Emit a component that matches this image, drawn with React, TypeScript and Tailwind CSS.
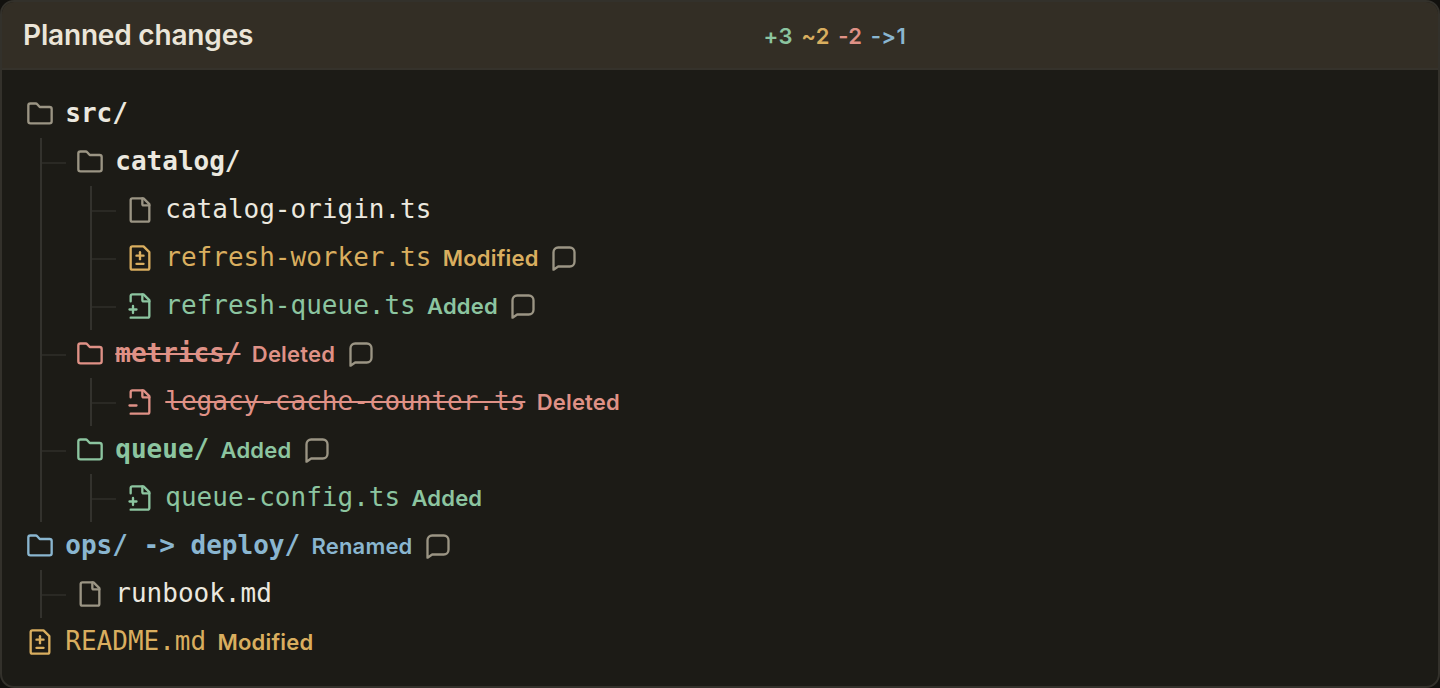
import React from 'react';

type Status = 'added' | 'modified' | 'deleted' | 'renamed';

interface TreeNode {
  name: string;
  kind: 'folder' | 'file';
  status?: Status;
  comment?: boolean;
  children?: TreeNode[];
}

const tree: TreeNode[] = [
  {
    name: 'src/',
    kind: 'folder',
    children: [
      {
        name: 'catalog/',
        kind: 'folder',
        children: [
          { name: 'catalog-origin.ts', kind: 'file' },
          { name: 'refresh-worker.ts', kind: 'file', status: 'modified', comment: true },
          { name: 'refresh-queue.ts', kind: 'file', status: 'added', comment: true },
        ],
      },
      {
        name: 'metrics/',
        kind: 'folder',
        status: 'deleted',
        comment: true,
        children: [{ name: 'legacy-cache-counter.ts', kind: 'file', status: 'deleted' }],
      },
      {
        name: 'queue/',
        kind: 'folder',
        status: 'added',
        comment: true,
        children: [{ name: 'queue-config.ts', kind: 'file', status: 'added' }],
      },
    ],
  },
  {
    name: 'ops/ -> deploy/',
    kind: 'folder',
    status: 'renamed',
    comment: true,
    children: [{ name: 'runbook.md', kind: 'file' }],
  },
  { name: 'README.md', kind: 'file', status: 'modified' },
];

const statusLabel: Record<Status, string> = {
  added: 'Added',
  modified: 'Modified',
  deleted: 'Deleted',
  renamed: 'Renamed',
};

const statusColor: Record<Status, string> = {
  added: 'text-[#8cc5a0]',
  modified: 'text-[#d9ae5f]',
  deleted: 'text-[#df9186]',
  renamed: 'text-[#8ab6d0]',
};

const iconPaths = {
  folder: ['M3.8 20h16.4a1.8 1.8 0 0 0 1.8-1.8V7.8A1.8 1.8 0 0 0 20.2 6H11.8L9.6 3.6A1.8 1.8 0 0 0 8.3 3H3.8A1.8 1.8 0 0 0 2 4.8v13.4A1.8 1.8 0 0 0 3.8 20Z'],
  file: ['M15 2H5.5A1.5 1.5 0 0 0 4 3.5v17A1.5 1.5 0 0 0 5.5 22h13a1.5 1.5 0 0 0 1.5-1.5V7Z', 'M14 2v4.8a1.2 1.2 0 0 0 1.200 1.200H20'],
  modified: ['M15 2H5.5A1.5 1.5 0 0 0 4 3.5v17A1.5 1.5 0 0 0 5.5 22h13a1.5 1.5 0 0 0 1.5-1.5V7Z', 'M9 10h6', 'M12 7v6', 'M9 17h6'],
  added: ['M4 22h14.5a1.5 1.5 0 0 0 1.5-1.5V7L15 2H5.5A1.5 1.5 0 0 0 4 3.5V8', 'M14 2v4.8a1.2 1.2 0 0 0 1.200 1.200H20', 'M3 15h6', 'M6 12v6'],
  deleted: ['M4 22h14.5a1.5 1.5 0 0 0 1.5-1.5V7L15 2H5.5A1.5 1.5 0 0 0 4 3.5V8', 'M14 2v4.8a1.2 1.2 0 0 0 1.200 1.200H20', 'M3 15h6'],
  comment: ['M7 19.3h10a4 4 0 0 0 4-4V7a4 4 0 0 0-4-4H7a4 4 0 0 0-4 4v15Z'],
};

const Icon: React.FC<{ name: keyof typeof iconPaths; className: string }> = ({ name, className }) => (
  <svg
    viewBox="0 0 24 24"
    fill="none"
    stroke="currentColor"
    strokeWidth={2}
    strokeLinecap="round"
    strokeLinejoin="round"
    className={`size-7 shrink-0 ${className}`}
  >
    {iconPaths[name].map((d) => <path key={d} d={d} />)}
  </svg>
);

const fileIcon = (status?: Status) => {
  if (status === 'added' || status === 'deleted' || status === 'modified') return status;
  return 'file';
};

const TreeItem: React.FC<{ node: TreeNode; nested?: boolean }> = ({ node, nested }) => {
  const color = node.status ? statusColor[node.status] : 'text-[#ebe8df]';
  const iconColor = node.status ? statusColor[node.status] : 'text-[#9b9584]';

  return (
    <li>
      <div className="flex h-12 items-center">
        {nested && <span className="mt-0.5 mr-2.5 h-0.5 w-6 shrink-0 bg-[#2a2924]" />}
        <Icon name={node.kind === 'folder' ? 'folder' : fileIcon(node.status)} className={iconColor} />
        <span
          className={`mb-0.5 ml-[11.3px] font-['DejaVu_Sans_Mono',monospace] text-[26px] leading-none whitespace-pre ${color} ${node.kind === 'folder' ? 'font-bold' : ''} ${node.status === 'deleted' ? 'line-through decoration-2' : ''}`}
        >
          {node.name}
        </span>
        {node.status && (
          <span className={`ml-[11.3px] text-[22px] leading-none font-[580] tracking-[0.2px] ${color}`}>
            {statusLabel[node.status]}
          </span>
        )}
        {node.comment && <Icon name="comment" className="ml-[11.5px] text-[#9b9584]" />}
      </div>
      {node.children && (
        <ul className={nested ? 'ml-12 border-l-2 border-[#33322d]' : 'ml-3.5 border-l-2 border-[#33322d]'}>
          {node.children.map((child) => <TreeItem key={child.name} node={child} nested />)}
        </ul>
      )}
    </li>
  );
};

const App: React.FC = () => {
  return (
    <div className="h-[688px] w-full bg-[#12110e] font-['Inter',sans-serif]">
      <div className="flex h-full flex-col overflow-hidden rounded-[14px] border-2 border-[#33312b] bg-[#1c1b16]">
        <div className="grid h-[68px] shrink-0 grid-cols-2 items-center border-b-2 border-[#35322b] bg-[#332e25] px-[21px]">
          <h1 className="text-[28px] leading-none font-[560] tracking-[-0.18px] text-[#ebe5d8]">Planned changes</h1>
          <div className="mt-0.5 flex gap-[8.5px] pl-[43.5px] text-[22px] leading-none font-[560] tracking-[0.3px] [font-feature-settings:'calt'_0]">
            <span className={statusColor.added}>+3</span>
            <span className={statusColor.modified}>~2</span>
            <span className={statusColor.deleted}>-2</span>
            <span className={statusColor.renamed}>-&gt;1</span>
          </div>
        </div>
        <ul className="px-6 pt-5">
          {tree.map((node) => <TreeItem key={node.name} node={node} />)}
        </ul>
      </div>
    </div>
  );
};

export default App;
